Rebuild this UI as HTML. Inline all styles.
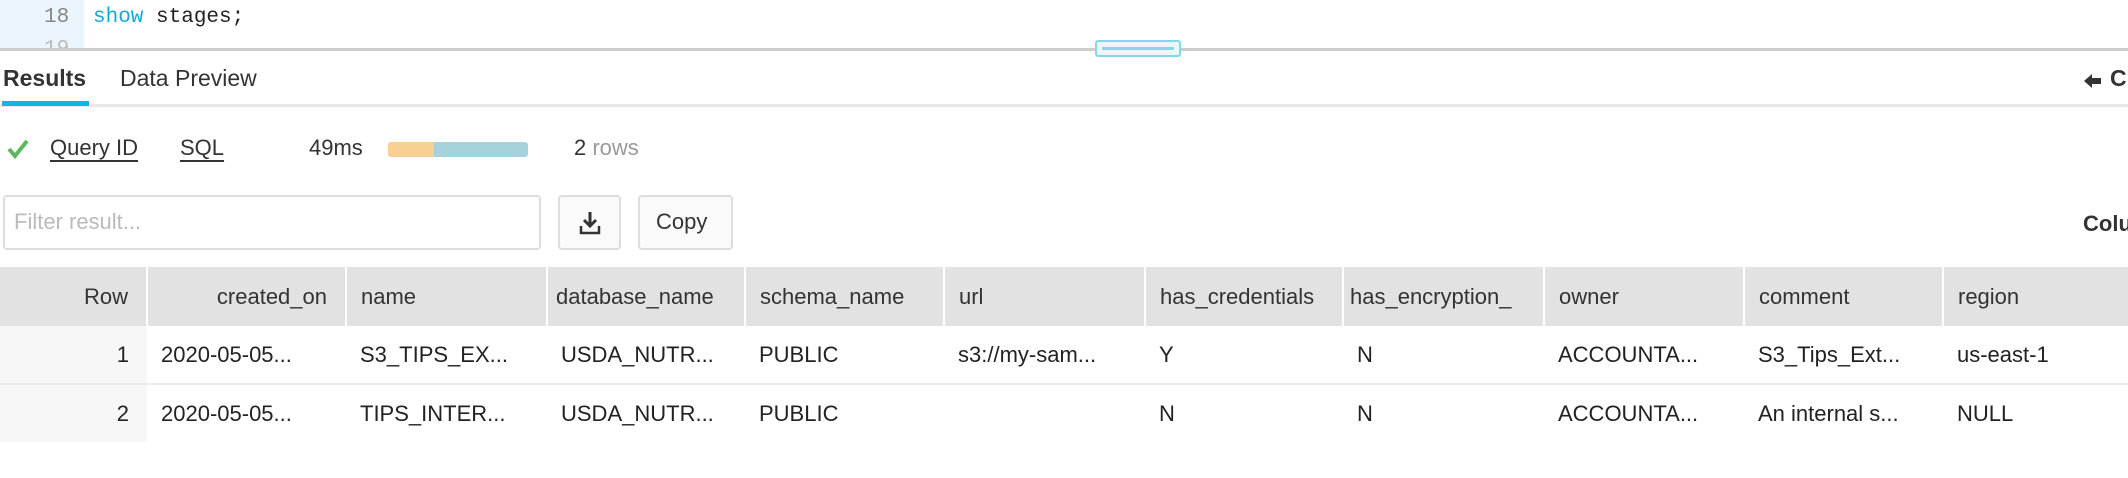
<!DOCTYPE html>
<html><head><meta charset="utf-8"><style>
*{margin:0;padding:0;box-sizing:border-box}
body{width:2128px;height:478px;background:#fff;position:relative;overflow:hidden;font-family:"Liberation Sans",sans-serif;color:#222}
.a{position:absolute;white-space:nowrap}
.mono{font-family:"Liberation Mono",monospace;font-size:21px}
.t{font-size:22px}
table{position:absolute;left:0;top:267px;border-collapse:collapse;font-size:22px;table-layout:fixed}
th{background:#e2e2e2;height:59px;font-weight:normal;color:#333;text-align:left;padding-left:14px;border-left:2px solid #fff;overflow:hidden;white-space:nowrap}
th:first-child{border-left:none;text-align:right;padding-right:18px}
td{height:58px;padding-left:14px;white-space:nowrap;color:#222}
td:first-child{background:#f7f7f7;text-align:right;padding-right:18px}
tr.r1 td{border-bottom:2px solid #ececec}
</style></head><body>
<div class="a" style="left:0;top:0;width:84px;height:48px;background:#eaf6fc"></div>
<div class="a mono" style="left:44px;top:6px;color:#888">18</div>
<div class="a mono" style="left:44px;top:38px;color:#bbb;height:10px;overflow:hidden">19</div>
<div class="a mono" style="left:93px;top:6px"><span style="color:#13a9d6">show</span> stages;</div>
<div class="a" style="left:0;top:48px;width:2128px;height:3px;background:#ccc"></div>
<div class="a" style="left:1095px;top:40px;width:86px;height:17px;background:#eaf8fc;border:2px solid #86d6ea;border-radius:3px"></div>
<div class="a" style="left:1102px;top:47px;width:72px;height:3px;background:#86d6ea"></div>
<div class="a" style="left:3px;top:65px;font-size:23px;font-weight:bold;color:#333">Results</div>
<div class="a" style="left:120px;top:65px;font-size:23px;color:#333">Data Preview</div>
<div class="a" style="left:0;top:104px;width:2128px;height:3px;background:#e8e8e8"></div>
<div class="a" style="left:2px;top:101px;width:87px;height:5px;background:#0cb8e0"></div>
<svg class="a" style="left:2084px;top:73px" width="18" height="16"><path d="M0 8 L8 1 V5 H17 V11 H8 V15 Z" fill="#333"/></svg>
<div class="a" style="left:2110px;top:65px;font-size:23px;font-weight:bold;color:#333">C</div>
<svg class="a" style="left:6px;top:138px" width="24" height="22"><path d="M3 11 L9 18 L21 3" stroke="#5cb85c" stroke-width="4" fill="none"/></svg>
<div class="a t" style="left:50px;top:135px;color:#333;text-decoration:underline;text-underline-offset:5px">Query ID</div>
<div class="a t" style="left:180px;top:135px;color:#333;text-decoration:underline;text-underline-offset:5px">SQL</div>
<div class="a t" style="left:309px;top:135px;color:#333">49ms</div>
<div class="a" style="left:388px;top:142px;width:140px;height:15px;background:#a6d2dd;border-radius:3px;overflow:hidden"><div style="width:46px;height:15px;background:#f8d093"></div></div>
<div class="a t" style="left:574px;top:135px;color:#333">2 <span style="color:#999">rows</span></div>
<div class="a" style="left:3px;top:195px;width:538px;height:55px;border:2px solid #ddd;border-radius:4px"></div>
<div class="a t" style="left:14px;top:209px;color:#bbb">Filter result...</div>
<div class="a" style="left:558px;top:195px;width:63px;height:55px;border:2px solid #ddd;border-radius:4px;background:#fafafa"></div>
<svg class="a" style="left:578px;top:210px" width="24" height="26"><path d="M12 2 V15 M6 10 L12 16 L18 10" stroke="#333" stroke-width="3" fill="none"/><path d="M3 16 V23 H21 V16" stroke="#333" stroke-width="2.5" fill="none"/></svg>
<div class="a" style="left:638px;top:195px;width:95px;height:55px;border:2px solid #ddd;border-radius:4px;background:#fafafa"></div>
<div class="a t" style="left:656px;top:209px;color:#333">Copy</div>
<div class="a t" style="left:2083px;top:211px;font-weight:bold;color:#333">Colu</div>
<table>
<colgroup><col style="width:147px"><col style="width:199px"><col style="width:201px"><col style="width:198px"><col style="width:199px"><col style="width:201px"><col style="width:198px"><col style="width:201px"><col style="width:200px"><col style="width:199px"><col style="width:185px"></colgroup>
<tr><th>Row</th><th style="text-align:right;padding-right:18px">created_on</th><th>name</th><th style="padding-left:8px">database_name</th><th>schema_name</th><th>url</th><th>has_credentials</th><th style="padding-left:6px">has_encryption_</th><th>owner</th><th>comment</th><th>region</th></tr>
<tr class="r1"><td>1</td><td>2020-05-05...</td><td>S3_TIPS_EX...</td><td>USDA_NUTR...</td><td>PUBLIC</td><td>s3://my-sam...</td><td>Y</td><td>N</td><td>ACCOUNTA...</td><td>S3_Tips_Ext...</td><td>us-east-1</td></tr>
<tr><td>2</td><td>2020-05-05...</td><td>TIPS_INTER...</td><td>USDA_NUTR...</td><td>PUBLIC</td><td></td><td>N</td><td>N</td><td>ACCOUNTA...</td><td>An internal s...</td><td>NULL</td></tr>
</table>
</body></html>
